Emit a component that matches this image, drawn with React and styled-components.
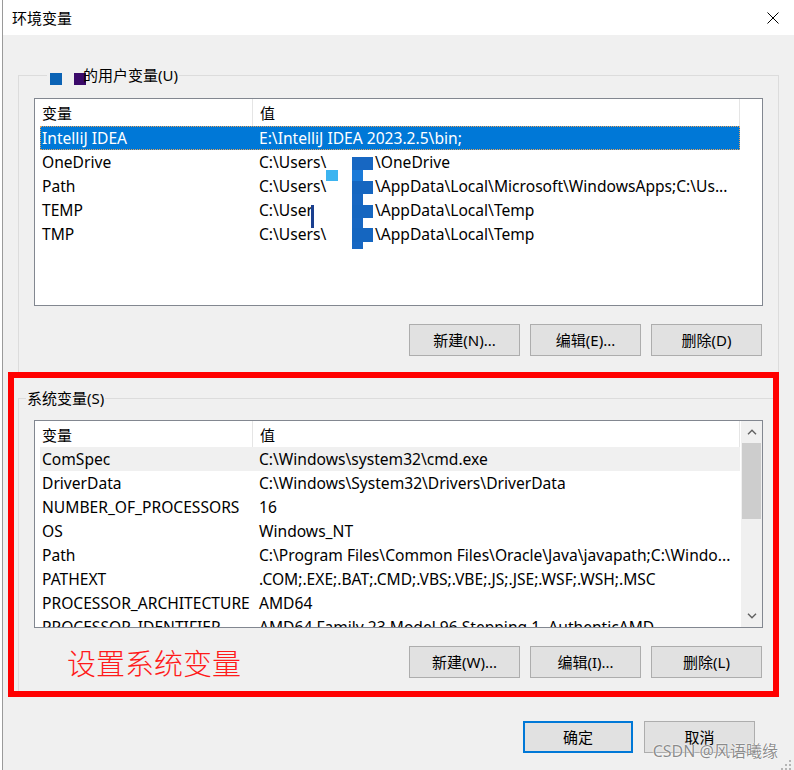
import React from 'react';
import styled, { createGlobalStyle } from 'styled-components';

const FONT = `"Noto Sans", "Noto Sans CJK SC", sans-serif`;

const GlobalStyle = createGlobalStyle`
  html, body { margin: 0; padding: 0; background: #fff; }
  body { font-family: ${FONT}; }
  *, *::before, *::after { box-sizing: border-box; }
`;

const Window = styled.div`
  position: relative;
  width: 792px;
  height: 770px;
  margin-left: 2px;
  border-left: 1px solid #9a9a9a;
  display: flex;
  flex-direction: column;
  font-family: ${FONT};
  font-size: 15px;
  color: #000;
  overflow: hidden;
`;

const TitleBar = styled.div`
  height: 35px;
  flex: none;
  background: #fff;
  display: flex;
  align-items: center;
  justify-content: space-between;
  padding: 0 15px 0 9px;
`;

const Title = styled.span`
  font-size: 15px;
  line-height: 20px;
`;

const Body = styled.div`
  position: relative;
  flex: 1;
  background: #f0f0f0;
  padding-top: 30px;
`;

const Group = styled.fieldset`
  margin: ${p => p.$top || 0}px 15px 0 15px;
  padding: 0;
  border: 1px solid #dcdcdc;
  min-width: 0;
`;

const GroupLabel = styled.legend`
  margin-left: ${p => p.$offset}px;
  padding: 0 1px;
  line-height: 20px;
  height: 20px;
  font-size: 15px;
  white-space: nowrap;
`;

const Swatch = styled.span`
  display: inline-block;
  width: 12px;
  height: 12px;
  background: ${p => p.$color};
  vertical-align: -4px;
  margin-left: ${p => p.$ml || 0}px;
  margin-right: ${p => p.$mr || 0}px;
`;

const GroupBody = styled.div`
  padding: ${p => p.$top}px 15px ${p => p.$bottom}px 15px;
`;

const List = styled.div`
  position: relative;
  height: 208px;
  border: 1px solid #828790;
  background: #fff;
  display: flex;
  font-size: 15.6px;
`;

const ListMain = styled.div`
  flex: 1;
  min-width: 0;
  display: flex;
  flex-direction: column;
  overflow: hidden;
`;

const HeaderRow = styled.div`
  flex: none;
  display: grid;
  grid-template-columns: 218px 487px;
  height: ${p => p.$h}px;
  font-size: 15px;
`;

const HeaderCell = styled.div`
  border-right: 1px solid #e5e5e5;
  padding: 2px 0 0 7px;
  line-height: ${p => p.$h - 2}px;
  white-space: nowrap;
`;

const Rows = styled.div`
  width: 705px;
  padding-left: 5px;
`;

const Row = styled.div`
  display: grid;
  grid-template-columns: 213px 487px;
  height: 24px;
  background: ${p => (p.$state === 'selected' ? '#0078d7' : p.$state === 'hover' ? '#f0f0f0' : 'transparent')};
  color: ${p => (p.$state === 'selected' ? '#fff' : '#000')};
  outline: ${p => (p.$state === 'selected' ? '1px dotted #e8a35c' : 'none')};
  outline-offset: -1px;
`;

const Cell = styled.div`
  padding: 1px 0 0 ${p => p.$pad}px;
  line-height: 23px;
  white-space: nowrap;
  overflow: hidden;
`;

const Masked = styled.span`
  display: inline-block;
  width: 116px;
  overflow: hidden;
  vertical-align: top;
`;

const RedactMarks = styled.svg`
  position: absolute;
  left: 0;
  top: 0;
  pointer-events: none;
`;

const Scrollbar = styled.div`
  flex: none;
  width: 21px;
  background: #f0f0f0;
  display: flex;
  flex-direction: column;
`;

const ArrowBox = styled.div`
  height: 22px;
  flex: none;
  display: flex;
  align-items: center;
  justify-content: center;
`;

const Track = styled.div`
  flex: 1;
  padding: 0 1px;
`;

const Thumb = styled.div`
  height: 76px;
  background: #cdcdcd;
`;

const ButtonRow = styled.div`
  display: flex;
  align-items: center;
  justify-content: flex-end;
  gap: ${p => p.$gap || 10}px;
  margin-top: ${p => p.$top}px;
  padding-right: ${p => p.$right || 1}px;
`;

const Button = styled.button`
  width: ${p => p.$w || 111}px;
  height: 32px;
  padding: 0;
  background: #e1e1e1;
  border: ${p => (p.$primary ? '2px solid #0078d7' : '1px solid #adadad')};
  border-radius: 0;
  font-family: ${FONT};
  font-size: 15px;
  color: #000;
  line-height: 20px;
`;

const Annotation = styled.span`
  margin-left: 33px;
  margin-right: auto;
  font-family: "Noto Sans CJK SC", sans-serif;
  font-weight: 300;
  font-size: 29px;
  line-height: 32px;
  color: #ff1a1a;
  white-space: nowrap;
`;

const RedBox = styled.div`
  position: absolute;
  left: 5px;
  top: 337px;
  width: 771px;
  height: 325px;
  border: 6px solid #ff0000;
  pointer-events: none;
`;

const Watermark = styled.span`
  position: absolute;
  right: 16px;
  bottom: 9px;
  font-family: ${FONT};
  font-size: 16px;
  line-height: 19px;
  color: rgba(95, 95, 95, 0.72);
  text-shadow: 0 0 2px #fff, 0 0 1px #fff;
  white-space: nowrap;
`;

const Grip = styled.svg`
  position: absolute;
  right: 2px;
  bottom: 0;
`;

const userVars = [
  { name: 'IntelliJ IDEA', value: 'E:\\IntelliJ IDEA 2023.2.5\\bin;', state: 'selected' },
  { name: 'OneDrive', prefix: 'C:\\Users\\', suffix: '\\OneDrive' },
  { name: 'Path', prefix: 'C:\\Users\\', suffix: '\\AppData\\Local\\Microsoft\\WindowsApps;C:\\Us...' },
  { name: 'TEMP', prefix: 'C:\\User', suffix: '\\AppData\\Local\\Temp' },
  { name: 'TMP', prefix: 'C:\\Users\\', suffix: '\\AppData\\Local\\Temp' },
];

const sysVars = [
  { name: 'ComSpec', value: 'C:\\Windows\\system32\\cmd.exe', state: 'hover' },
  { name: 'DriverData', value: 'C:\\Windows\\System32\\Drivers\\DriverData' },
  { name: 'NUMBER_OF_PROCESSORS', value: '16' },
  { name: 'OS', value: 'Windows_NT' },
  { name: 'Path', value: 'C:\\Program Files\\Common Files\\Oracle\\Java\\javapath;C:\\Windo...' },
  { name: 'PATHEXT', value: '.COM;.EXE;.BAT;.CMD;.VBS;.VBE;.JS;.JSE;.WSF;.WSH;.MSC' },
  { name: 'PROCESSOR_ARCHITECTURE', value: 'AMD64' },
  { name: 'PROCESSOR_IDENTIFIER', value: 'AMD64 Family 23 Model 96 Stepping 1, AuthenticAMD' },
];

function VarList({ rows, headerHeight, scroll, redact }) {
  return (
    <List>
      <ListMain>
        <HeaderRow $h={headerHeight}>
          <HeaderCell $h={headerHeight}>变量</HeaderCell>
          <HeaderCell $h={headerHeight}>值</HeaderCell>
        </HeaderRow>
        <Rows>
          {rows.map(r => (
            <Row key={r.name} $state={r.state}>
              <Cell $pad={2}>{r.name}</Cell>
              <Cell $pad={6}>
                {r.value !== undefined ? (
                  r.value
                ) : (
                  <>
                    <Masked>{r.prefix}</Masked>
                    {r.suffix}
                  </>
                )}
              </Cell>
            </Row>
          ))}
        </Rows>
      </ListMain>
      {scroll && (
        <Scrollbar>
          <ArrowBox>
            <svg width="10" height="6" viewBox="0 0 10 6">
              <polyline points="1,5.2 5,1.2 9,5.2" fill="none" stroke="#606060" strokeWidth="1.4" />
            </svg>
          </ArrowBox>
          <Track>
            <Thumb />
          </Track>
          <ArrowBox>
            <svg width="10" height="6" viewBox="0 0 10 6">
              <polyline points="1,0.8 5,4.8 9,0.8" fill="none" stroke="#606060" strokeWidth="1.4" />
            </svg>
          </ArrowBox>
        </Scrollbar>
      )}
      {redact && (
        <RedactMarks width="727" height="206" viewBox="0 0 727 206">
          <rect x="317" y="58" width="11" height="92" fill="#1767c2" />
          <rect x="317" y="58" width="21" height="13" fill="#1767c2" />
          <rect x="317" y="82" width="21" height="13" fill="#1566c0" />
          <rect x="317" y="106" width="21" height="13" fill="#1566c0" />
          <rect x="317" y="129" width="21" height="14" fill="#1566c0" />
          <rect x="317" y="71" width="11" height="11" fill="#1a7ad8" />
          <rect x="291" y="71" width="12" height="11" fill="#3cb4f0" />
          <rect x="276" y="106" width="3" height="23" fill="#1a3f8f" />
        </RedactMarks>
      )}
    </List>
  );
}

export default function App() {
  return (
    <>
      <GlobalStyle />
      <Window>
        <TitleBar>
          <Title>环境变量</Title>
          <svg width="12" height="12" viewBox="0 0 12 12">
            <path d="M0.5 0.5 L11.5 11.5 M11.5 0.5 L0.5 11.5" stroke="#000" strokeWidth="1" />
          </svg>
        </TitleBar>
        <Body>
          <Group>
            <GroupLabel $offset={28}>
              <Swatch $color="#0b63b5" $ml={2} $mr={12} />
              <Swatch $color="#3b0a6a" $mr={-3} />
              的用户变量(U)
            </GroupLabel>
            <GroupBody $top={13} $bottom={19}>
              <VarList rows={userVars} headerHeight={27} redact />
              <ButtonRow $top={18}>
                <Button>新建(N)...</Button>
                <Button>编辑(E)...</Button>
                <Button>删除(D)</Button>
              </ButtonRow>
            </GroupBody>
          </Group>
          <Group $top={12}>
            <GroupLabel $offset={7}>系统变量(S)</GroupLabel>
            <GroupBody $top={12} $bottom={14}>
              <VarList rows={sysVars} headerHeight={26} scroll />
              <ButtonRow $top={18}>
                <Annotation>设置系统变量</Annotation>
                <Button>新建(W)...</Button>
                <Button>编辑(I)...</Button>
                <Button>删除(L)</Button>
              </ButtonRow>
            </GroupBody>
          </Group>
          <ButtonRow $top={28} $gap={11} $right={39}>
            <Button $primary $w={110}>确定</Button>
            <Button>取消</Button>
          </ButtonRow>
          <RedBox />
        </Body>
        <Watermark>CSDN @风语曦缘</Watermark>
        <Grip width="13" height="11" viewBox="0 0 13 11">
          <rect x="10" y="1" width="2" height="2" fill="#b5b5b5" />
          <rect x="6" y="5" width="2" height="2" fill="#b5b5b5" />
          <rect x="10" y="5" width="2" height="2" fill="#b5b5b5" />
          <rect x="2" y="9" width="2" height="2" fill="#b5b5b5" />
          <rect x="6" y="9" width="2" height="2" fill="#b5b5b5" />
          <rect x="10" y="9" width="2" height="2" fill="#b5b5b5" />
        </Grip>
      </Window>
    </>
  );
}
